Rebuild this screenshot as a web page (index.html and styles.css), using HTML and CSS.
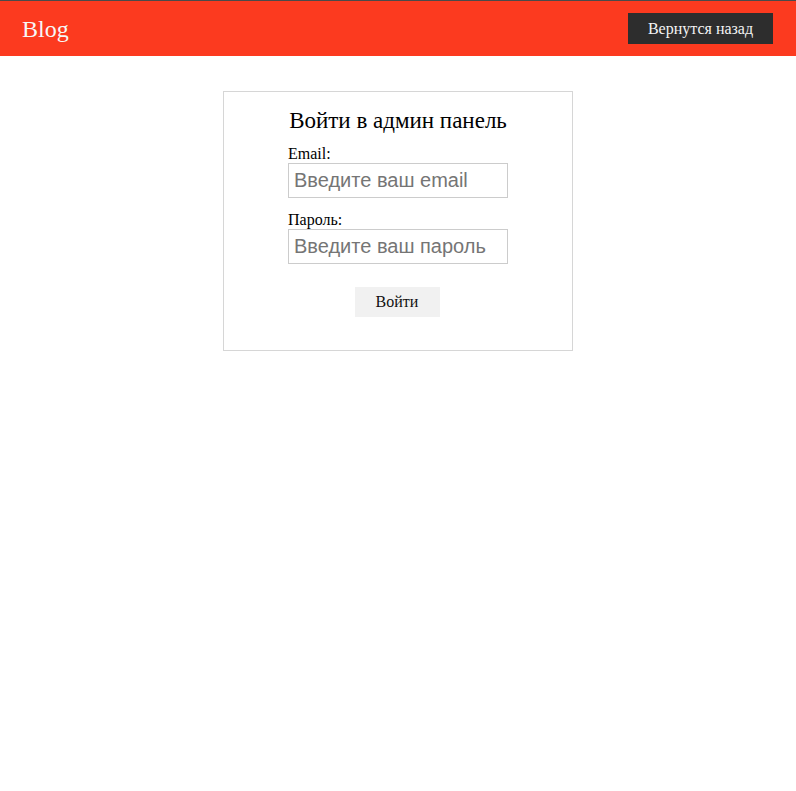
FILE: index.html
```html
<!DOCTYPE html>
<html lang="ru">
<head>
<meta charset="utf-8">
<title>Blog</title>
<link rel="stylesheet" href="styles.css">
</head>
<body>
<header class="topbar">
  <a class="brand" href="#">Blog</a>
  <a class="back-btn" href="#">Вернутся назад</a>
</header>
<main class="page">
  <form class="login-card">
    <div class="login-inner">
      <h2 class="login-title">Войти в админ панель</h2>
      <label class="field-label" for="email">Email:</label>
      <input class="field-input" id="email" type="email" placeholder="Введите ваш email">
      <label class="field-label second" for="pass">Пароль:</label>
      <input class="field-input" id="pass" type="password" placeholder="Введите ваш пароль">
      <div class="actions">
        <button class="submit-btn" type="button">Войти</button>
      </div>
    </div>
  </form>
</main>
</body>
</html>
```

FILE: styles.css
```css
* { box-sizing: border-box; }
html, body { margin: 0; padding: 0; background: #fff; }
body {
  font-family: "Liberation Serif", "Times New Roman", serif;
  font-size: 16px;
  color: #000;
}
.topbar {
  height: 56px;
  border-top: 1px solid #4a4a4a;
  background: #fc3a1f;
  display: flex;
  align-items: center;
  justify-content: space-between;
  padding: 0 23px 0 22px;
}
.brand {
  color: #f7f7f7;
  text-decoration: none;
  font-size: 24px;
  margin-top: 1px;
}
.back-btn {
  display: flex;
  align-items: center;
  justify-content: center;
  width: 145px;
  height: 31px;
  margin-top: 0;
  background: #2d2d2d;
  color: #f4f4f4;
  text-decoration: none;
  font-size: 16px;
}
.page {
  display: flex;
  justify-content: center;
  padding-top: 35px;
}
.login-card {
  width: 350px;
  height: 260px;
  border: 1px solid #d6d6d6;
  display: flex;
  justify-content: center;
  margin: 0;
}
.login-inner {
  width: 220px;
  display: flex;
  flex-direction: column;
  padding-top: 15px;
}
.login-title {
  margin: 0 0 10px;
  font-size: 23px;
  font-weight: normal;
  text-align: center;
  white-space: nowrap;
  line-height: 28px;
}
.field-label {
  display: block;
  line-height: 18px;
}
.field-label.second { margin-top: 13px; }
.field-input {
  width: 220px;
  height: 35px;
  border: 1px solid #cccccc;
  padding: 0 5px;
  font-family: "Liberation Sans", Arial, sans-serif;
  font-size: 20px;
  color: #000;
  outline: none;
  margin: 0;
}
.field-input::placeholder { color: #757575; }
.actions {
  display: flex;
  justify-content: center;
  margin-top: 23px;
}
.submit-btn {
  width: 85px;
  height: 30px;
  border: none;
  background: #f1f1f1;
  font-family: "Liberation Serif", "Times New Roman", serif;
  font-size: 16px;
  color: #111;
  padding: 0;
  margin-left: -2px;
  cursor: pointer;
}
```
